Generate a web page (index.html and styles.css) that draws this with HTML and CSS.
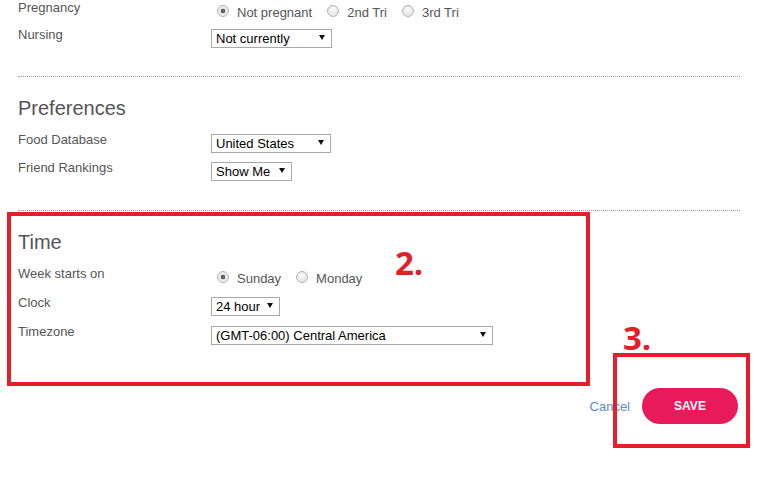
FILE: index.html
```html
<!DOCTYPE html>
<html>
<head>
    <meta charset="utf-8">
    <link rel="stylesheet" href="styles.css">
    <title>Settings</title>
</head>
<body>
<div class="page">

    <section class="group group-profile">
        <div class="field field-radio">
            <span class="field-label">Pregnancy</span>
            <div class="radios">
                <label class="radio"><input type="radio" name="pregnancy" checked> Not pregnant</label>
                <label class="radio"><input type="radio" name="pregnancy"> 2nd Tri</label>
                <label class="radio"><input type="radio" name="pregnancy"> 3rd Tri</label>
            </div>
        </div>
        <div class="field">
            <span class="field-label">Nursing</span>
            <span class="select-box">
                <select class="select select-nursing"><option>Not currently</option></select>
            </span>
        </div>
    </section>

    <section class="group group-prefs">
        <h2 class="group-title">Preferences</h2>
        <div class="field">
            <span class="field-label">Food Database</span>
            <span class="select-box">
                <select class="select select-food"><option>United States</option></select>
            </span>
        </div>
        <div class="field">
            <span class="field-label">Friend Rankings</span>
            <span class="select-box">
                <select class="select select-friends"><option>Show Me</option></select>
            </span>
        </div>
    </section>

    <section class="group group-time">
        <h2 class="group-title">Time</h2>
        <div class="field field-radio field-tall">
            <span class="field-label">Week starts on</span>
            <div class="radios">
                <label class="radio"><input type="radio" name="week" checked> Sunday</label>
                <label class="radio"><input type="radio" name="week"> Monday</label>
            </div>
        </div>
        <div class="field field-tall">
            <span class="field-label">Clock</span>
            <span class="select-box">
                <select class="select select-clock"><option>24 hour</option></select>
            </span>
        </div>
        <div class="field">
            <span class="field-label">Timezone</span>
            <span class="select-box">
                <select class="select select-zone"><option>(GMT-06:00) Central America</option></select>
            </span>
        </div>
    </section>

    <div class="actions">
        <a class="cancel" href="#">Cancel</a>
        <button class="save" type="submit">SAVE</button>
    </div>

    <!-- annotations -->
    <div class="mark mark-time"></div>
    <span class="mark-num num-2">2.</span>
    <div class="mark mark-save"></div>
    <span class="mark-num num-3">3.</span>

</div>
</body>
</html>
```
FILE: styles.css
```css
body {
    margin: 0;
    background: #fff;
    color: #555;
    font-family: "Liberation Sans", Arial, sans-serif;
    font-size: 13px;
}

.page {
    position: relative;
    height: 484px;
    padding: 0 21px 0 18px;
    overflow: hidden;
}

.group {
    padding-bottom: 21px;
    border-bottom: 1px dotted #9a9a9a;
}

.group-profile {
    padding-bottom: 20px;
}

.group-prefs {
    padding-top: 19px;
}

.group-time {
    padding-top: 19px;
    padding-bottom: 0;
    border-bottom: none;
}

.group-title {
    margin: 0 0 12px;
    font-size: 20px;
    line-height: 24px;
    font-weight: normal;
    color: #555;
}

.field {
    display: grid;
    grid-template-columns: 193px auto;
    align-items: start;
    height: 28.5px;
}

.field-radio {
    height: 27px;
}

.field-radio.field-tall {
    height: 28px;
}

.field.field-tall {
    height: 29px;
}

.field-label {
    line-height: 16px;
}

.radios {
    display: flex;
    margin-top: 5px;
    line-height: 16px;
}

.radio {
    display: flex;
    align-items: flex-start;
    gap: 8px;
    margin-right: 15px;
}

.radio:first-child {
    margin-left: 6px;
}

.radio input {
    appearance: none;
    width: 12px;
    height: 12px;
    margin: 0;
    border: 1px solid #b4b4b4;
    border-radius: 50%;
    background: radial-gradient(circle at 50% 40%, #fafafa, #dedede);
}

.radio input:checked {
    background: radial-gradient(circle, #5f5f5f 0, #5f5f5f 2px, #e6e6e6 2.6px, #f5f5f5 100%);
}

.select-box {
    position: relative;
    display: inline-block;
    justify-self: start;
    margin-top: 2px;
}

.select-box::after {
    content: "";
    position: absolute;
    right: 7px;
    top: 6px;
    border-left: 3px solid transparent;
    border-right: 3px solid transparent;
    border-top: 5px solid #111;
    pointer-events: none;
}

.select {
    appearance: none;
    display: block;
    height: 19px;
    margin: 0;
    padding: 0 0 0 4px;
    border: 1px solid #a9a9a9;
    border-radius: 0;
    background: #fff;
    color: #000;
    font-family: "Liberation Sans", Arial, sans-serif;
    font-size: 13px;
}

.select-nursing { width: 121px; }
.select-food { width: 120px; }
.select-friends { width: 81px; }
.select-clock { width: 69px; }
.select-zone { width: 282px; }

.actions {
    display: flex;
    justify-content: flex-end;
    align-items: center;
    gap: 12px;
    margin-top: 36px;
    padding-right: 2px;
}

.cancel {
    color: #5b8bc6;
    text-decoration: none;
}

.save {
    width: 96px;
    height: 36px;
    border: none;
    border-radius: 18px;
    background: #e91a5b;
    color: #fff;
    font-family: "Liberation Sans", Arial, sans-serif;
    font-size: 12px;
    font-weight: bold;
}

/* red annotation boxes */
.mark {
    position: absolute;
    box-sizing: border-box;
    border: 4.5px solid #e3202a;
}

.mark-time {
    left: 7px;
    top: 212px;
    width: 583px;
    height: 174px;
}

.mark-save {
    left: 613px;
    top: 353px;
    width: 137px;
    height: 95px;
}

.mark-num {
    position: absolute;
    font-family: "Open Sans", sans-serif;
    font-weight: 700;
    font-size: 33px;
    line-height: 1;
    color: #e3202a;
}

.num-2 {
    left: 395px;
    top: 246px;
}

.num-3 {
    left: 623px;
    top: 321px;
}
```
